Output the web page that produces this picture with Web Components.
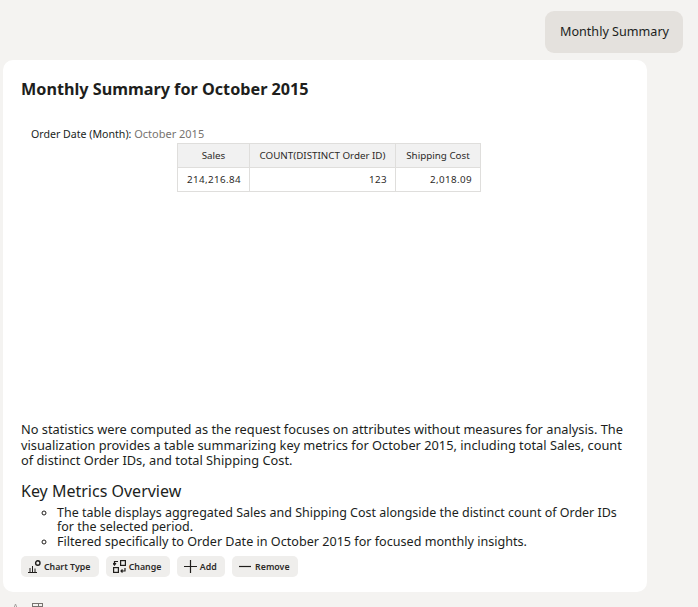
<!DOCTYPE html>
<html>
<head>
<meta charset="utf-8">
<style>
  html, body { margin: 0; height: 100%; overflow: hidden; background: #f4f3f1; }
  body { font-family: "Noto Sans", "Open Sans", sans-serif; color: #201e1c; }
</style>
</head>
<body>
<chat-thread>
  <user-bubble>Monthly Summary</user-bubble>
  <answer-card heading="Monthly Summary for October 2015">
    <filter-line label="Order Date (Month):" value="October 2015"></filter-line>
    <summary-table></summary-table>
    <p slot="body">No statistics were computed as the request focuses on attributes without measures for analysis. The visualization provides a table summarizing key metrics for October 2015, including total Sales, count of distinct Order IDs, and total Shipping Cost.</p>
    <key-points slot="body" title="Key Metrics Overview">
      <li>The table displays aggregated Sales and Shipping Cost alongside the distinct count of Order IDs for the selected period.</li>
      <li>Filtered specifically to Order Date in October 2015 for focused monthly insights.</li>
    </key-points>
    <action-chip slot="actions" icon="chart">Chart Type</action-chip>
    <action-chip slot="actions" icon="change">Change</action-chip>
    <action-chip slot="actions" icon="add">Add</action-chip>
    <action-chip slot="actions" icon="remove">Remove</action-chip>
  </answer-card>
  <feedback-row></feedback-row>
</chat-thread>
<script>
class ChatThread extends HTMLElement {
  constructor() {
    super()
    this.attachShadow({ mode: "open" }).innerHTML = `
      <style>
        :host { display: flex; flex-direction: column; padding: 11px 15px 0 3px; }
      </style>
      <slot></slot>`
  }
}
customElements.define("chat-thread", ChatThread)

class UserBubble extends HTMLElement {
  constructor() {
    super()
    this.attachShadow({ mode: "open" }).innerHTML = `
      <style>
        :host { display: block; align-self: flex-end; background: #e4e1dd; border-radius: 9px; width: 138px; box-sizing: border-box;
          height: 42px; line-height: 41px; padding: 0 0 0 15px; font-size: 12.6px; color: #201e1c; margin-bottom: 7px; white-space: nowrap; }
      </style>
      <slot></slot>`
  }
}
customElements.define("user-bubble", UserBubble)

class AnswerCard extends HTMLElement {
  constructor() {
    super()
    this.attachShadow({ mode: "open" }).innerHTML = `
      <style>
        :host { display: flex; flex-direction: column; width: 644px; height: 532px; box-sizing: border-box;
          background: #fff; border-radius: 10px; padding: 18px 18px 15px 18px; }
        h2 { margin: 0; font-size: 16.2px; line-height: 22px; font-weight: 700; }
        .viz { height: 322px; padding-top: 27px; box-sizing: border-box; }
        .text { font-size: 12.8px; line-height: 15.5px; }
        ::slotted(p) { margin: 0; }
        .actions { display: flex; gap: 7px; margin-top: auto; }
      </style>
      <h2></h2>
      <div class="viz"><slot></slot></div>
      <div class="text"><slot name="body"></slot></div>
      <div class="actions"><slot name="actions"></slot></div>`
    this.shadowRoot.querySelector("h2").textContent = this.getAttribute("heading")
  }
}
customElements.define("answer-card", AnswerCard)

class FilterLine extends HTMLElement {
  constructor() {
    super()
    this.attachShadow({ mode: "open" }).innerHTML = `
      <style>
        :host { display: block; padding-left: 10px; font-size: 10.6px; line-height: 14px; height: 16px; white-space: nowrap; }
        span { color: #77736f; font-size: 11px; }
      </style>
      ${this.getAttribute("label")} <span>${this.getAttribute("value")}</span>`
  }
}
customElements.define("filter-line", FilterLine)

class SummaryTable extends HTMLElement {
  constructor() {
    super()
    this.attachShadow({ mode: "open" }).innerHTML = `
      <style>
        :host { display: block; margin-left: 156px; }
        table { border-collapse: collapse; font-size: 9.8px; color: #2c2a28; }
        th, td { border: 1px solid #dfdedc; padding: 0 8px; box-sizing: border-box; white-space: nowrap; }
        th { background: #f1f1f1; font-weight: 400; text-align: center; height: 24px; }
        td { text-align: right; height: 24px; letter-spacing: .4px; }
        .a { width: 72px; } .b { width: 146px; } .c { width: 85px; }
      </style>
      <table>
        <tr><th class="a">Sales</th><th class="b">COUNT(DISTINCT Order ID)</th><th class="c">Shipping Cost</th></tr>
        <tr><td>214,216.84</td><td>123</td><td>2,018.09</td></tr>
      </table>`
  }
}
customElements.define("summary-table", SummaryTable)

class KeyPoints extends HTMLElement {
  constructor() {
    super()
    this.attachShadow({ mode: "open" }).innerHTML = `
      <style>
        :host { display: block; margin-top: 12px; }
        h3 { margin: 0 0 5px; font-size: 16px; line-height: 20px; font-weight: 400; }
        ul { margin: 0; padding-left: 36px; list-style: circle; font-size: 12.6px; }
        ::slotted(li) { line-height: 14.5px; }
        ::slotted(li:first-child) { font-size: 12.47px; }
      </style>
      <h3></h3>
      <ul><slot></slot></ul>`
    this.shadowRoot.querySelector("h3").textContent = this.getAttribute("title")
  }
}
customElements.define("key-points", KeyPoints)

const chipIcons = {
  chart: `<svg width="13" height="13" viewBox="0 0 13 13" fill="none" stroke="#201e1c"><path d="M0 12.5h9M2 12V8M4.5 12V6M7 12V8.5"/><circle cx="9.8" cy="3" r="2.2" stroke-width="1.4"/></svg>`,
  change: `<svg width="13" height="13" viewBox="0 0 13 13" fill="none" stroke="#201e1c" stroke-width="1.2"><rect x="0.6" y="7.6" width="4.8" height="4.8"/><rect x="7.6" y="0.6" width="4.8" height="4.8"/><path d="M5 1.5H1.5V5M0 3.2l1.5 1.8L3 3.2M12 8v3H8M9.5 9.5 8 11l1.5 1.5"/></svg>`,
  add: `<svg width="13" height="13" viewBox="0 0 13 13" fill="none" stroke="#201e1c" stroke-width="1.2"><path d="M6.5 0v13M0 6.5h13"/></svg>`,
  remove: `<svg width="13" height="13" viewBox="0 0 13 13" fill="none" stroke="#201e1c" stroke-width="1.2"><path d="M0 6.5h12"/></svg>`
}

class ActionChip extends HTMLElement {
  constructor() {
    super()
    this.attachShadow({ mode: "open" }).innerHTML = `
      <style>
        :host { display: inline-flex; align-items: center; gap: 3px; height: 21px; padding: 0 8.4px 0 7px;
          background: #efeeec; border-radius: 5px; font-size: 8.8px; font-weight: 600; color: #2c2a28; white-space: nowrap; }
        svg { display: block; }
      </style>
      ${chipIcons[this.getAttribute("icon")]}<slot></slot>`
  }
}
customElements.define("action-chip", ActionChip)

class FeedbackRow extends HTMLElement {
  constructor() {
    super()
    this.attachShadow({ mode: "open" }).innerHTML = `
      <style>
        :host { display: flex; gap: 12px; padding: 11px 0 0 8px; }
      </style>
      <svg width="9" height="12" viewBox="0 0 9 12" fill="none" stroke="#a5a29f"><path d="M1 10 4.5 1 8 10"/></svg>
      <svg width="12" height="12" viewBox="0 0 12 12" fill="none" stroke="#77736f"><rect x="0.5" y="0.5" width="10" height="10"/><path d="M0.5 3.5h10M6.5 0.5v3"/></svg>`
  }
}
customElements.define("feedback-row", FeedbackRow)
</script>
</body>
</html>
